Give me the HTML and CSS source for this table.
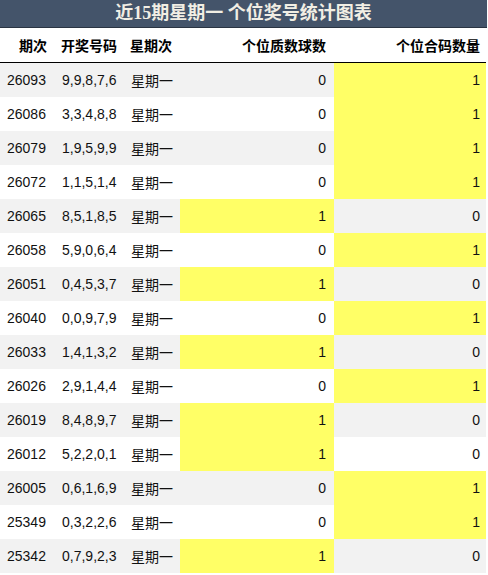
FILE: index.html
```html
<!DOCTYPE html>
<html lang="zh">
<head>
<meta charset="utf-8">
<title>近15期星期一 个位奖号统计图表</title>
<link rel="stylesheet" href="styles.css">
</head>
<body>
<div class="wrap">
  <div class="title">近15期星期一 个位奖号统计图表</div>
  <table class="stats">
    <colgroup>
      <col class="c1"><col class="c2"><col class="c3"><col class="c4"><col class="c5">
    </colgroup>
    <thead>
      <tr>
        <th class="h1">期次</th>
        <th class="left">开奖号码</th>
        <th class="left">星期次</th>
        <th class="num4">个位质数球数</th>
        <th class="num5">个位合码数量</th>
      </tr>
    </thead>
    <tbody>
      <tr><td>26093</td><td>9,9,8,7,6</td><td>星期一</td><td class="num4">0</td><td class="num5 hi">1</td></tr>
      <tr><td>26086</td><td>3,3,4,8,8</td><td>星期一</td><td class="num4">0</td><td class="num5 hi">1</td></tr>
      <tr><td>26079</td><td>1,9,5,9,9</td><td>星期一</td><td class="num4">0</td><td class="num5 hi">1</td></tr>
      <tr><td>26072</td><td>1,1,5,1,4</td><td>星期一</td><td class="num4">0</td><td class="num5 hi">1</td></tr>
      <tr><td>26065</td><td>8,5,1,8,5</td><td>星期一</td><td class="num4 hi">1</td><td class="num5">0</td></tr>
      <tr><td>26058</td><td>5,9,0,6,4</td><td>星期一</td><td class="num4">0</td><td class="num5 hi">1</td></tr>
      <tr><td>26051</td><td>0,4,5,3,7</td><td>星期一</td><td class="num4 hi">1</td><td class="num5">0</td></tr>
      <tr><td>26040</td><td>0,0,9,7,9</td><td>星期一</td><td class="num4">0</td><td class="num5 hi">1</td></tr>
      <tr><td>26033</td><td>1,4,1,3,2</td><td>星期一</td><td class="num4 hi">1</td><td class="num5">0</td></tr>
      <tr><td>26026</td><td>2,9,1,4,4</td><td>星期一</td><td class="num4">0</td><td class="num5 hi">1</td></tr>
      <tr><td>26019</td><td>8,4,8,9,7</td><td>星期一</td><td class="num4 hi">1</td><td class="num5">0</td></tr>
      <tr><td>26012</td><td>5,2,2,0,1</td><td>星期一</td><td class="num4 hi">1</td><td class="num5">0</td></tr>
      <tr><td>26005</td><td>0,6,1,6,9</td><td>星期一</td><td class="num4">0</td><td class="num5 hi">1</td></tr>
      <tr><td>25349</td><td>0,3,2,2,6</td><td>星期一</td><td class="num4">0</td><td class="num5 hi">1</td></tr>
      <tr><td>25342</td><td>0,7,9,2,3</td><td>星期一</td><td class="num4 hi">1</td><td class="num5">0</td></tr>
    </tbody>
  </table>
</div>
</body>
</html>
```
FILE: styles.css
```css
html, body {
  margin: 0;
  padding: 0;
  background: #ffffff;
}

.wrap {
  width: 487px;
  font-family: "Liberation Sans", "Noto Sans CJK SC", sans-serif;
  color: #111111;
}

.title {
  height: 27px;
  line-height: 27px;
  background: #44546a;
  border-bottom: 1px solid #2a3442;
  color: #f1eee4;
  font-family: "Liberation Serif", "Noto Sans CJK SC", serif;
  font-weight: bold;
  font-size: 18px;
  text-align: center;
}

.stats {
  border-collapse: collapse;
  table-layout: fixed;
  width: 486px;
  font-size: 14px;
}

.c1 { width: 55px; }
.c2 { width: 69px; }
.c3 { width: 56px; }
.c4 { width: 154px; }
.c5 { width: 152px; }

.stats th {
  height: 34px;
  padding: 0 7px 0 6px;
  font-weight: bold;
  text-align: left;
  white-space: nowrap;
  border-bottom: 1px solid #000000;
  color: #000000;
}

.stats th.h1 {
  text-align: right;
  padding-right: 8px;
}

.stats td {
  height: 34px;
  padding: 0 7px;
  text-align: left;
  white-space: nowrap;
}

.stats tbody tr:nth-child(odd) td {
  background: #f2f2f2;
}

.stats .num4 {
  text-align: right;
  padding-right: 8px;
}

.stats .num5 {
  text-align: right;
  padding-right: 6px;
}

.stats tbody tr td.hi {
  background: #ffff66;
}
```
